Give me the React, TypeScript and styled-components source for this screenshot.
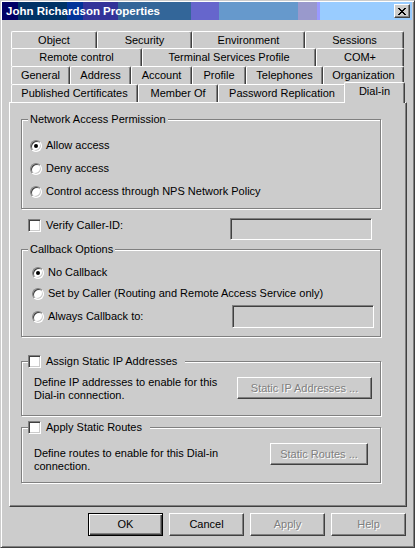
import React from "react";
import styled, { createGlobalStyle, css } from "styled-components";

const GlobalStyle = createGlobalStyle`
  html, body { margin: 0; padding: 0; background: #cccccc; }
  body { font-family: "Liberation Sans", Arial, sans-serif; font-size: 11px; color: #000; }
  * { box-sizing: border-box; }
`;

const Window = styled.div`
  width: 415px;
  height: 548px;
  background: #cccccc;
  border: 1px solid;
  border-color: #cccccc #404040 #404040 #cccccc;
  box-shadow: inset 1px 1px 0 #ffffff, inset -1px -1px 0 #808080;
  padding: 1px 2px 1px 1px;
  display: flex;
  flex-direction: column;
`;

const TitleBar = styled.div`
  flex: none;
  height: 18px;
  display: flex;
  align-items: center;
  justify-content: space-between;
  padding: 0 2px 0 4px;
  background: linear-gradient(
    to right,
    #000066 0 16px,
    #003366 16px 65px,
    #003399 65px 81px,
    #333399 81px 116px,
    #336699 116px 189px,
    #6666cc 189px 217px,
    #6699cc 217px 296px,
    #9999cc 296px 315px,
    #9999ff 315px 318px,
    #99ccff 318px 100%
  );
`;

const TitleText = styled.span`
  color: #ffffff;
  font-weight: bold;
  font-size: 11.5px;
  line-height: 18px;
  white-space: nowrap;
`;

const CloseButton = styled.div`
  width: 16px;
  height: 14px;
  display: flex;
  align-items: center;
  justify-content: center;
  background: #cccccc;
  border: 1px solid;
  border-color: #ffffff #404040 #404040 #ffffff;
  box-shadow: inset -1px -1px 0 #808080;
`;

const Body = styled.div`
  flex: 1;
  display: flex;
  flex-direction: column;
  padding: 11px 5px 0 7px;
`;

const TabStrip = styled.div`
  display: flex;
  flex-direction: column;
  padding-left: 2px;
`;

const TabRow = styled.div<{ $h: number }>`
  display: flex;
  height: ${(p) => p.$h}px;
`;

const Tab = styled.div<{ $w: number; $active?: boolean }>`
  flex: 0 0 ${(p) => p.$w}px;
  display: flex;
  align-items: center;
  justify-content: center;
  background: #cccccc;
  border-top: 1px solid #ffffff;
  border-left: 1px solid #ffffff;
  border-right: 1px solid #404040;
  box-shadow: inset -1px 0 0 #808080;
  border-radius: 2px 2px 0 0;
  white-space: nowrap;
  line-height: 13px;
  ${(p) =>
    p.$active &&
    css`
      flex-basis: ${p.$w + 3}px;
      margin: -2px -1px -1px -2px;
      padding-bottom: 3px;
      position: relative;
      z-index: 1;
    `}
`;

const Page = styled.div`
  display: flex;
  flex-direction: column;
  align-items: flex-start;
  border: 1px solid;
  border-color: #ffffff #404040 #404040 #ffffff;
  box-shadow: inset -1px -1px 0 #808080;
  padding: 10px 0 23px 11px;
`;

const Group = styled.fieldset<{ $mt?: number }>`
  width: 360px;
  margin: ${(p) => p.$mt ?? 0}px 0 0 0;
  padding: 0;
  min-width: 0;
  border: 1px solid #808080;
  box-shadow: 1px 1px 0 #ffffff, inset 1px 1px 0 #ffffff;
`;

const Legend = styled.legend<{ $pr?: number }>`
  display: flex;
  align-items: center;
  gap: 5px;
  height: 13px;
  line-height: 13px;
  margin-left: 6px;
  padding: 0 ${(p) => p.$pr ?? 2}px 0 2px;
  background: #cccccc;
  white-space: nowrap;
`;

const CheckLegend = styled(Legend)`
  padding-left: 0;
`;

const GroupContent = styled.div<{ $pad: string }>`
  display: flex;
  flex-direction: column;
  padding: ${(p) => p.$pad};
`;

const OptionRow = styled.div<{ $h: number; $mt?: number }>`
  display: flex;
  align-items: center;
  justify-content: space-between;
  height: ${(p) => p.$h}px;
  margin-top: ${(p) => p.$mt ?? 0}px;
`;

const OptionLabel = styled.label`
  display: flex;
  align-items: center;
  gap: 4px;
  line-height: 13px;
  white-space: nowrap;
`;

const CheckLabel = styled.label<{ $mt?: number }>`
  display: flex;
  align-items: center;
  gap: 5px;
  line-height: 13px;
  margin-top: ${(p) => p.$mt ?? 0}px;
  white-space: nowrap;
`;

const Radio = styled.span<{ $checked?: boolean }>`
  flex: none;
  width: 12px;
  height: 12px;
  border-radius: 50%;
  background: #ffffff;
  border: 1px solid;
  border-color: #808080 #ffffff #ffffff #808080;
  box-shadow: inset 1px 1px 0 #404040, inset -1px -1px 0 #cccccc;
  display: flex;
  align-items: center;
  justify-content: center;
  &::after {
    content: "";
    width: 4px;
    height: 4px;
    border-radius: 50%;
    background: ${(p) => (p.$checked ? "#000000" : "transparent")};
  }
`;

const CheckBox = styled.span`
  flex: none;
  width: 13px;
  height: 13px;
  background: #ffffff;
  border: 1px solid;
  border-color: #808080 #ffffff #ffffff #808080;
  box-shadow: inset 1px 1px 0 #404040, inset -1px -1px 0 #cccccc;
`;

const TextBox = styled.div<{ $h: number }>`
  flex: none;
  width: 142px;
  height: ${(p) => p.$h}px;
  background: #cccccc;
  border: 1px solid;
  border-color: #808080 #ffffff #ffffff #808080;
  box-shadow: inset 1px 1px 0 #404040, inset -1px -1px 0 #cccccc;
`;

const CallerRow = styled.div`
  width: 360px;
  height: 22px;
  margin-top: 9px;
  padding: 0 9px 0 7px;
  display: flex;
  align-items: flex-start;
  justify-content: space-between;
`;

const StaticRow = styled.div`
  display: flex;
  align-items: flex-start;
  justify-content: space-between;
`;

const Description = styled.div<{ $mt: number }>`
  line-height: 13px;
  margin-top: ${(p) => p.$mt}px;
  white-space: nowrap;
`;

const Button = styled.div<{ $w: number; $h: number; $mt?: number; $disabled?: boolean; $default?: boolean }>`
  flex: none;
  width: ${(p) => p.$w}px;
  height: ${(p) => p.$h}px;
  margin-top: ${(p) => p.$mt ?? 0}px;
  display: flex;
  align-items: center;
  justify-content: center;
  background: #cccccc;
  border: 1px solid;
  border-color: #ffffff #404040 #404040 #ffffff;
  box-shadow: inset -1px -1px 0 #808080;
  line-height: 13px;
  white-space: nowrap;
  color: ${(p) => (p.$disabled ? "#808080" : "#000000")};
  text-shadow: ${(p) => (p.$disabled ? "1px 1px 0 #ffffff" : "none")};
  ${(p) =>
    p.$default &&
    css`
      border-color: #000000;
      box-shadow: inset 1px 1px 0 #ffffff, inset -1px -1px 0 #404040, inset -2px -2px 0 #808080;
    `}
`;

const ButtonRow = styled.div`
  display: flex;
  justify-content: flex-end;
  gap: 6px;
  margin-top: 6px;
  padding-right: 1px;
`;

const tabRows: { h: number; tabs: { label: string; w: number; active?: boolean }[] }[] = [
  {
    h: 17,
    tabs: [
      { label: "Object", w: 86 },
      { label: "Security", w: 95 },
      { label: "Environment", w: 113 },
      { label: "Sessions", w: 99 },
    ],
  },
  {
    h: 18,
    tabs: [
      { label: "Remote control", w: 131 },
      { label: "Terminal Services Profile", w: 174 },
      { label: "COM+", w: 88 },
    ],
  },
  {
    h: 18,
    tabs: [
      { label: "General", w: 59 },
      { label: "Address", w: 61 },
      { label: "Account", w: 61 },
      { label: "Profile", w: 54 },
      { label: "Telephones", w: 77 },
      { label: "Organization", w: 81 },
    ],
  },
  {
    h: 18,
    tabs: [
      { label: "Published Certificates", w: 127 },
      { label: "Member Of", w: 80 },
      { label: "Password Replication", w: 128 },
      { label: "Dial-in", w: 58, active: true },
    ],
  },
];

const CloseIcon = () => (
  <svg width="8" height="7" viewBox="0 0 8 7" shapeRendering="crispEdges">
    <path
      fill="#000"
      d="M0 0h2v1H0zM6 0h2v1H6zM1 1h2v1H1zM5 1h2v1H5zM2 2h4v1H2zM3 3h2v1H3zM2 4h4v1H2zM1 5h2v1H1zM5 5h2v1H5zM0 6h2v1H0zM6 6h2v1H6z"
    />
  </svg>
);

export default function App() {
  return (
    <>
      <GlobalStyle />
      <Window>
        <TitleBar>
          <TitleText>John Richardson Properties</TitleText>
          <CloseButton>
            <CloseIcon />
          </CloseButton>
        </TitleBar>
        <Body>
          <TabStrip>
            {tabRows.map((row, i) => (
              <TabRow key={i} $h={row.h}>
                {row.tabs.map((t) => (
                  <Tab key={t.label} $w={t.w} $active={t.active}>
                    {t.label}
                  </Tab>
                ))}
              </TabRow>
            ))}
          </TabStrip>
          <Page>
            <Group>
              <Legend>Network Access Permission</Legend>
              <GroupContent $pad="8px 0 5px 8px">
                <OptionRow $h={23}>
                  <OptionLabel>
                    <Radio $checked />
                    Allow access
                  </OptionLabel>
                </OptionRow>
                <OptionRow $h={23}>
                  <OptionLabel>
                    <Radio />
                    Deny access
                  </OptionLabel>
                </OptionRow>
                <OptionRow $h={23}>
                  <OptionLabel>
                    <Radio />
                    Control access through NPS Network Policy
                  </OptionLabel>
                </OptionRow>
              </GroupContent>
            </Group>

            <CallerRow>
              <CheckLabel $mt={1}>
                <CheckBox />
                Verify Caller-ID:
              </CheckLabel>
              <TextBox $h={22} />
            </CallerRow>

            <Group $mt={3}>
              <Legend>Callback Options</Legend>
              <GroupContent $pad="6px 6px 8px 10px">
                <OptionRow $h={21}>
                  <OptionLabel>
                    <Radio $checked />
                    No Callback
                  </OptionLabel>
                </OptionRow>
                <OptionRow $h={21}>
                  <OptionLabel>
                    <Radio />
                    Set by Caller (Routing and Remote Access Service only)
                  </OptionLabel>
                </OptionRow>
                <OptionRow $h={23} $mt={1}>
                  <OptionLabel>
                    <Radio />
                    Always Callback to:
                  </OptionLabel>
                  <TextBox $h={23} />
                </OptionRow>
              </GroupContent>
            </Group>

            <Group $mt={18}>
              <CheckLegend $pr={8}>
                <CheckBox />
                Assign Static IP Addresses
              </CheckLegend>
              <GroupContent $pad="8px 8px 13px 12px">
                <StaticRow>
                  <Description $mt={0}>
                    Define IP addresses to enable for this
                    <br />
                    Dial-in connection.
                  </Description>
                  <Button $w={135} $h={22} $mt={1} $disabled>
                    Static IP Addresses ...
                  </Button>
                </StaticRow>
              </GroupContent>
            </Group>

            <Group $mt={5}>
              <CheckLegend $pr={8}>
                <CheckBox />
                Apply Static Routes
              </CheckLegend>
              <GroupContent $pad="9px 12px 9px 12px">
                <StaticRow>
                  <Description $mt={4}>
                    Define routes to enable for this Dial-in
                    <br />
                    connection.
                  </Description>
                  <Button $w={98} $h={22} $disabled>
                    Static Routes ...
                  </Button>
                </StaticRow>
              </GroupContent>
            </Group>
          </Page>
          <ButtonRow>
            <Button $w={75} $h={23} $default>
              OK
            </Button>
            <Button $w={75} $h={23}>
              Cancel
            </Button>
            <Button $w={75} $h={23} $disabled>
              Apply
            </Button>
            <Button $w={75} $h={23} $disabled>
              Help
            </Button>
          </ButtonRow>
        </Body>
      </Window>
    </>
  );
}
